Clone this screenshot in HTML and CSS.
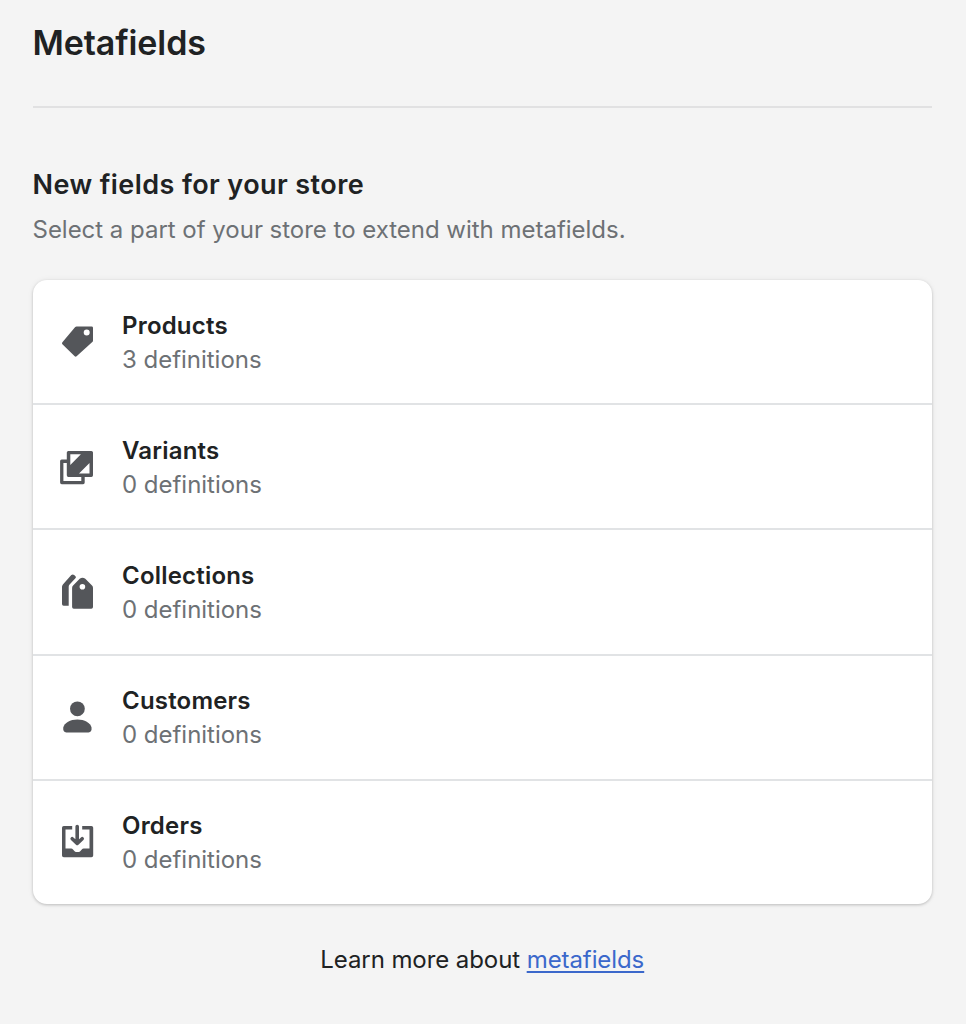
FILE: index.html
```html
<!DOCTYPE html>
<html lang="en">
<head>
  <meta charset="UTF-8" />
  <meta name="viewport" content="width=device-width, initial-scale=1.0">
  <title>Metafields</title>
  <link rel="stylesheet" href="styles.css">
</head>
<body>
  <header>
    <h1>Metafields</h1>
  </header>

  <main>
    <h2>New fields for your store</h2>
    <p class="intro">Select a part of your store to extend with metafields.</p>

    <div class="card">
      <div class="row">
        <svg class="icon" viewBox="0 0 40 40"><path fill-rule="evenodd" d="M19.6 4.4H34.6Q36 4.4 36 5.8V18.4Q36 19.4 35.3 20L19.6 34.3Q18.6 35.2 17.7 34.3L5.4 22.2Q4.5 21.2 5.4 20.2L18 5.2Q18.7 4.4 19.6 4.4ZM29.7 7.4a3 3 0 1 0 0 6a3 3 0 1 0 0-6Z"/></svg>
        <div>
          <h3>Products</h3>
          <p>3 definitions</p>
        </div>
      </div>
      <div class="row">
        <svg class="icon" viewBox="0 0 40 40"><path fill-rule="evenodd" d="M11.4 3.9H34.4Q36 3.9 36 5.5V28.3Q36 29.9 34.4 29.9H27.7V35.6Q27.7 37.2 26.1 37.2H4.7Q3.1 37.2 3.1 35.6V14.1Q3.1 12.5 4.7 12.5H9.8V5.5Q9.8 3.9 11.4 3.9ZM13.3 7.2V17.9L23.9 7.2ZM32.5 16V26.5H22ZM6.4 15.9V34H24.3V29.9H11.4Q9.8 29.9 9.8 28.3V15.9Z"/></svg>
        <div>
          <h3>Variants</h3>
          <p>0 definitions</p>
        </div>
      </div>
      <div class="row">
        <svg class="icon" viewBox="0 0 40 40"><path fill-rule="evenodd" d="M22.7 6.8Q25.5 4.8 28.3 6.8L35 13.6Q36 14.6 36 16V35Q36 36.7 34.3 36.7H16.8Q15.1 36.7 15.1 35V16Q15.1 14.6 16.1 13.6ZM25.4 12a2.8 2.8 0 1 0 0 5.6a2.8 2.8 0 1 0 0-5.6Z"/><path d="M14.3 3.1Q15.7 1.9 17.1 3L18.5 4.3Q19.5 5.3 18.4 6.3L12.6 12.4Q11.7 13.4 11.7 14.8V33.7H6.6Q5 33.7 5 32.1V14.8Q5 13.5 5.9 12.4Z"/></svg>
        <div>
          <h3>Collections</h3>
          <p>0 definitions</p>
        </div>
      </div>
      <div class="row">
        <svg class="icon" viewBox="0 0 40 40"><circle cx="20.4" cy="11.8" r="7.4"/><path d="M20.4 22.6C27.5 22.6 33.5 25.9 34.5 30.6C35 33.3 33.8 35.4 31.5 35.4H9.3C7 35.4 5.8 33.3 6.3 30.6C7.3 25.9 13.3 22.6 20.4 22.6Z"/></svg>
        <div>
          <h3>Customers</h3>
          <p>0 definitions</p>
        </div>
      </div>
      <div class="row">
        <svg class="icon" viewBox="0 0 40 40"><path d="M15.2 4V7.4H8.5V26.6H14.2Q15.3 26.6 16 27.4L17.6 29.2Q18.2 29.9 19 29.9H21.8Q22.6 29.9 23.2 29.2L24.8 27.4Q25.5 26.6 26.6 26.6H32.5V7.4H25.2V4H34.4Q36.2 4 36.2 5.8V33.5Q36.2 35.3 34.4 35.3H6.8Q5 35.3 5 33.5V5.8Q5 4 6.8 4Z"/><path class="arrow" d="M20.2 4.6V21.2M15.2 16.7L20.2 21.4L25.2 16.7"/></svg>
        <div>
          <h3>Orders</h3>
          <p>0 definitions</p>
        </div>
      </div>
    </div>
  </main>

  <footer>Learn more about <a href="#">metafields</a></footer>
</body>
</html>
```
FILE: styles.css
```css
* { box-sizing: border-box; }
body { margin: 0; padding: 0 34px 0 32.5px; font-family: Inter, "Liberation Sans", sans-serif; font-size: 24px; line-height: 34px; letter-spacing: -0.02px; color: #202223; background: #f4f4f4; }
h1, h2, h3, p { margin: 0; font-weight: 600; }
header { height: 108px; padding-top: 23px; border-bottom: 2px solid #e1e1e2; }
h1 { font-size: 34px; line-height: 40px; letter-spacing: -0.1px; }
h2 { margin-top: 60px; font-size: 27px; line-height: 34px; letter-spacing: 0.42px; }
p { font-weight: 400; color: #6d7175; }
.intro { margin-top: 11px; }
.card { margin-top: 33px; background: #fff; border-radius: 14px; box-shadow: 0 0 6px rgba(23, 24, 24, 0.06), 0 1px 3px rgba(0, 0, 0, 0.2); }
.row { display: flex; align-items: center; gap: 25px; height: 125.2px; padding-left: 24.5px; border-top: 2px solid #e1e3e5; }
.row:first-child { height: 123.2px; border-top: 0; }
.row div { padding-top: 2px; }
.row h3 { font-size: 24px; line-height: 34px; letter-spacing: 0.2px; }
.icon { width: 40px; height: 40px; flex-shrink: 0; fill: #54565a; }
.arrow { fill: none; stroke: #54565a; stroke-width: 3.6; stroke-linecap: round; stroke-linejoin: round; }
footer { margin-top: 39px; text-align: center; letter-spacing: -0.08px; }
a { color: #3b68cb; text-decoration: underline; text-decoration-thickness: 2px; text-underline-offset: 3px; }
```
